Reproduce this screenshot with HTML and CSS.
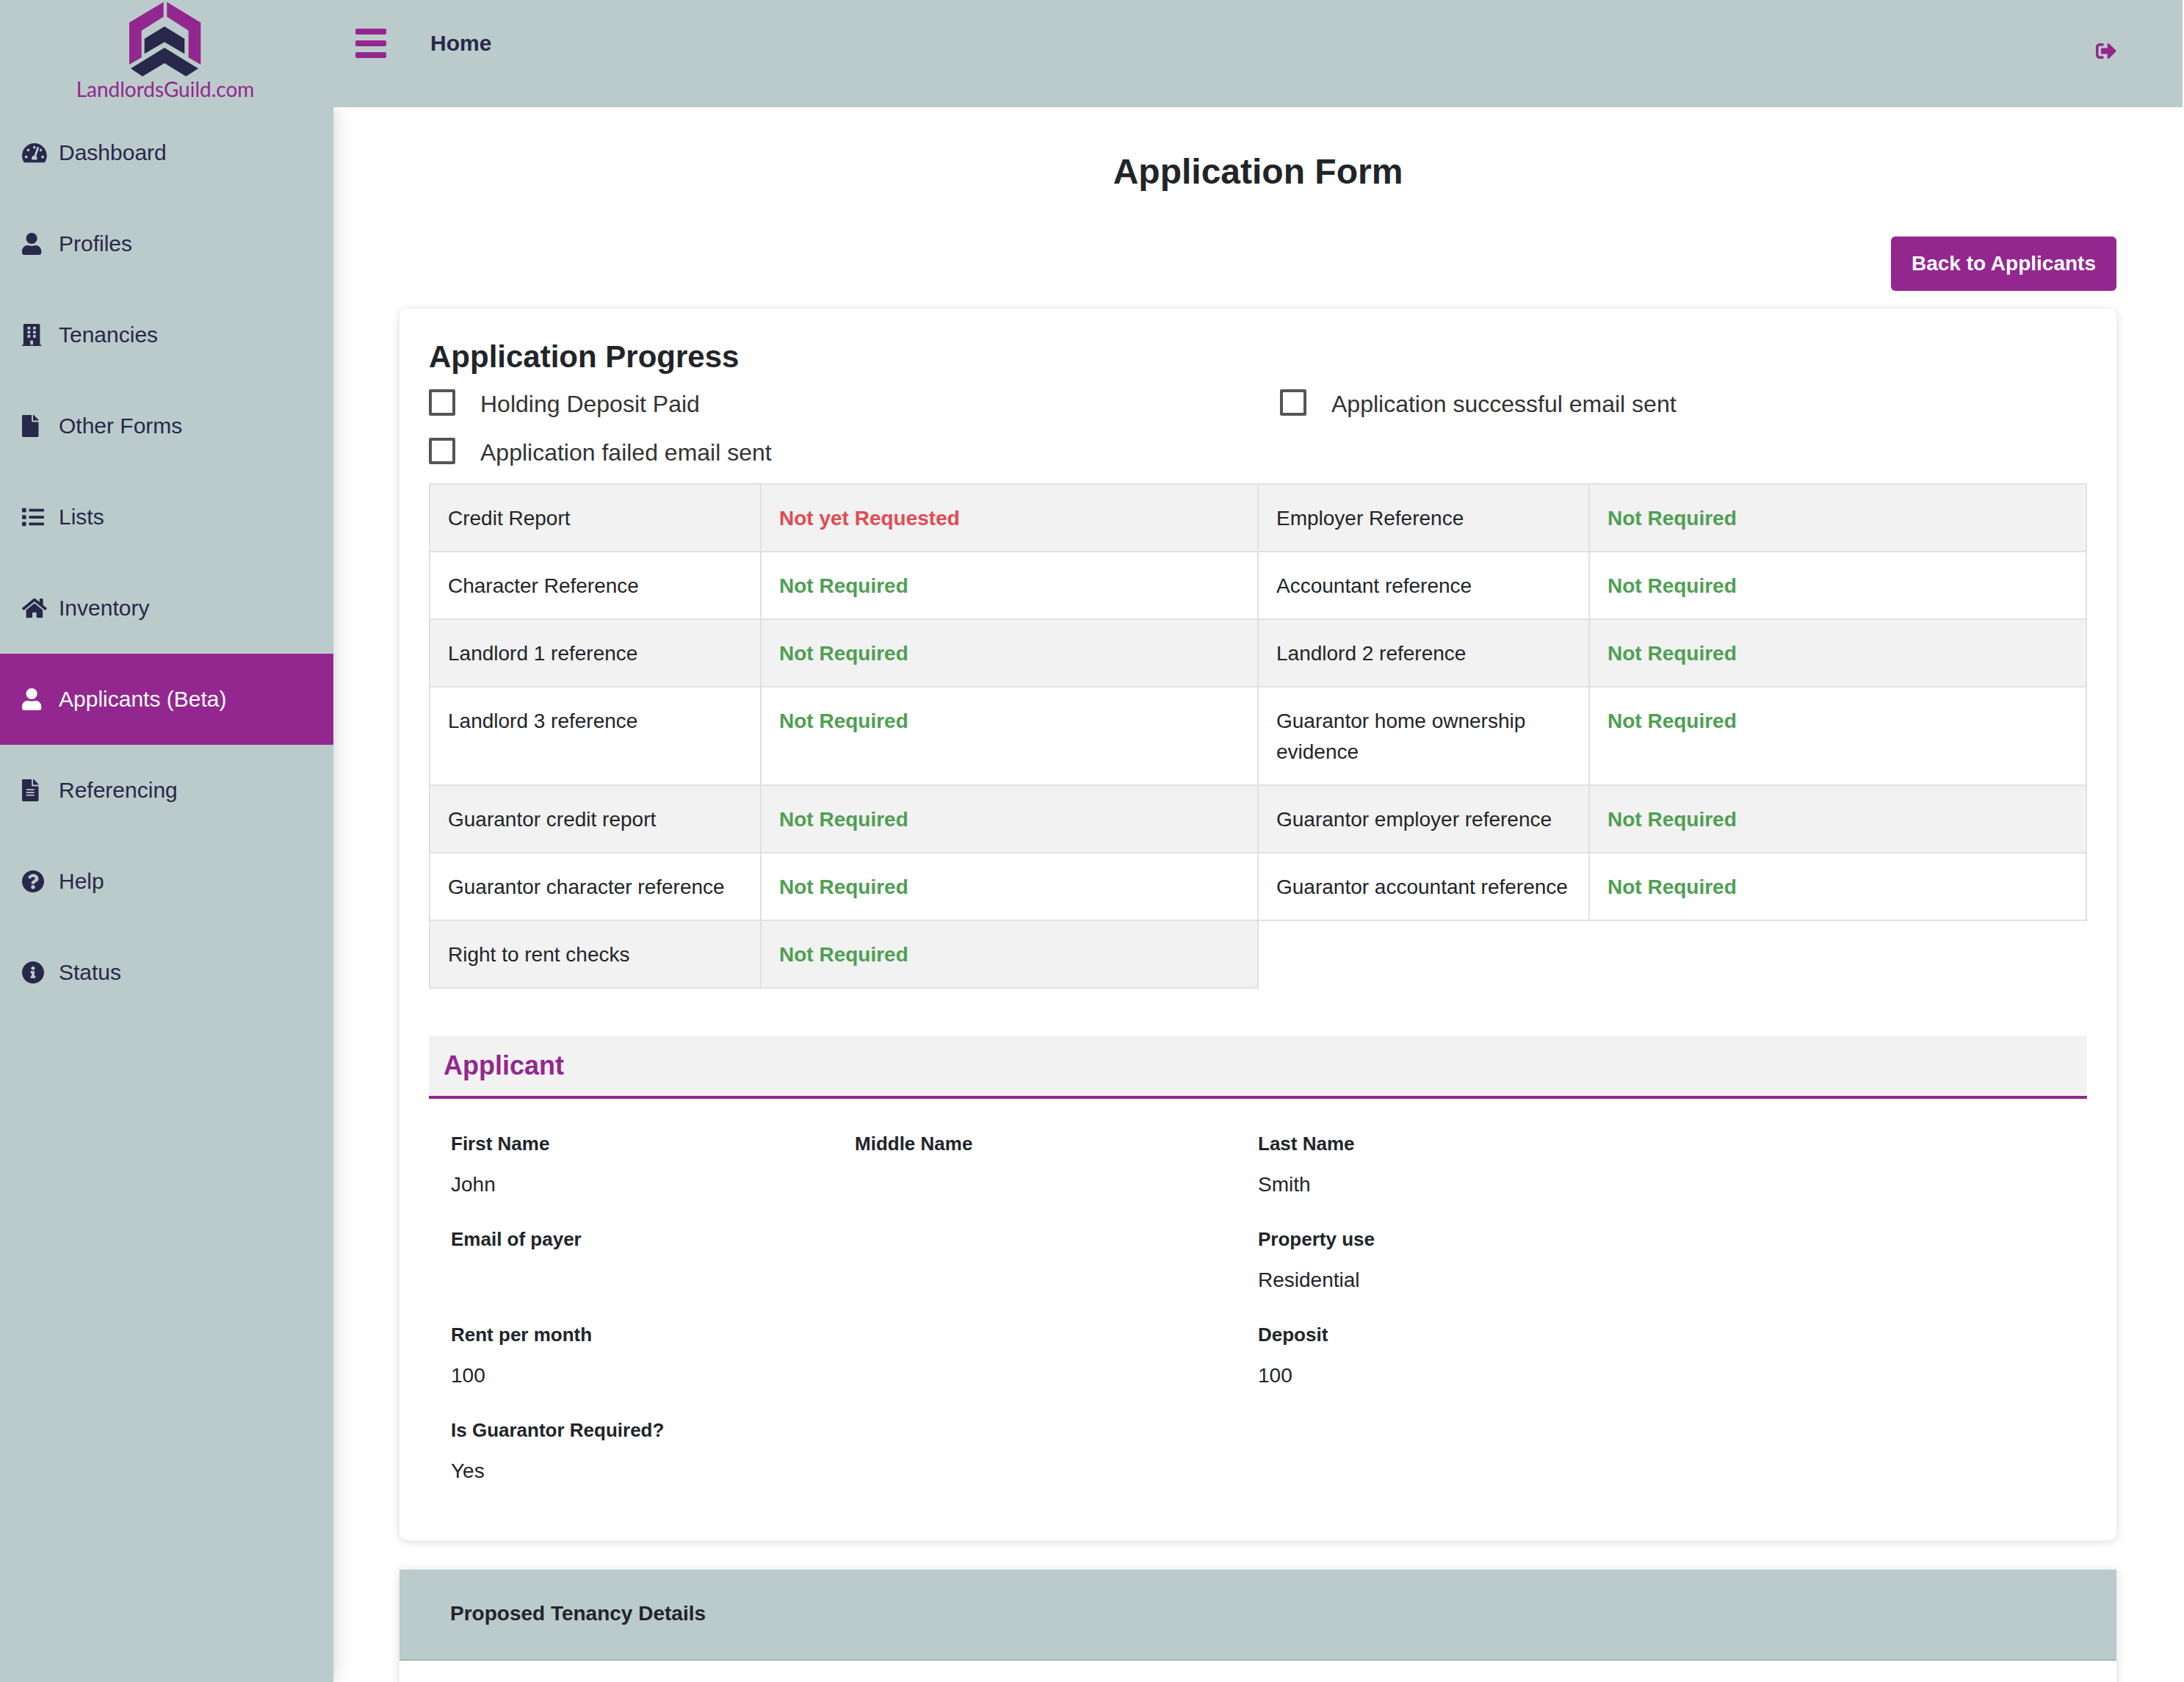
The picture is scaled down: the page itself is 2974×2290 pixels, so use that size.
FILE: index.html
```html
<!DOCTYPE html>
<html>
<head>
    <title>Application Form</title>
    <link rel="stylesheet" href="styles.css">
</head>
<body>
    <div class="page">
        <header class="topbar">
            <div class="brand">
                <svg class="brand-mark" viewBox="176 2 98 102">
                    <path fill="#93278f" d="M222.700 2.700L176 30.700V88L192.700 78.300V41.700L222.700 22.700zM227.300 2.700L273.300 30.700V88L256.700 78.300V41.700L227.300 22.700z"/>
                    <path fill="#28284a" d="M224 36L251.300 52.700V73.300L224 57.300L196.700 73.300V52.700z"/>
                    <path fill="#28284a" d="M224 65L270 93.300L253.300 104L224 86L194 104L178 93.300z"/>
                </svg>
                <span class="brand-name">LandlordsGuild.com</span>
            </div>
            <div class="menu-toggle"><span></span><span></span><span></span></div>
            <span class="crumb">Home</span>
            <svg class="logout" viewBox="0 0 512 384"><path d="M497 209L329 377c-15 15-41 4.500-41-17v-96H152c-13.300 0-24-10.700-24-24v-96c0-13.300 10.700-24 24-24h136V24c0-21.400 25.900-32 41-17l168 168c9.300 9.400 9.300 24.600 0 34zM192 372v-40c0-6.600-5.400-12-12-12H96c-17.700 0-32-14.300-32-32V96c0-17.700 14.300-32 32-32h84c6.600 0 12-5.400 12-12V12c0-6.600-5.400-12-12-12H96C43 0 0 43 0 96v192c0 53 43 96 96 96h84c6.600 0 12-5.400 12-12z"/></svg>
        </header>

        <div class="layout">
            <nav class="sidebar">
                <a class="nav-item">
                    <svg class="nav-icon" viewBox="0 0 576 512" preserveAspectRatio="xMinYMid"><path d="M288 32C128.940 32 0 160.940 0 320c0 52.800 14.250 102.260 39.060 144.800 5.610 9.620 16.300 15.200 27.440 15.200h443c11.140 0 21.830-5.580 27.440-15.200C561.750 422.260 576 372.800 576 320c0-159.060-128.940-288-288-288zm0 64c14.710 0 26.580 10.130 30.320 23.650-1.110 2.260-2.640 4.230-3.450 6.670l-9.220 27.670c-5.130 3.490-10.970 6.010-17.640 6.010-17.670 0-32-14.330-32-32S270.330 96 288 96zM96 384c-17.670 0-32-14.330-32-32s14.330-32 32-32 32 14.330 32 32-14.330 32-32 32zm48-160c-17.670 0-32-14.330-32-32s14.330-32 32-32 32 14.330 32 32-14.330 32-32 32zm246.770-72.410l-61.330 184C343.130 347.330 352 364.540 352 384c0 11.720-3.380 22.550-8.880 32H232.880c-5.500-9.450-8.880-20.280-8.880-32 0-33.940 26.500-61.430 59.900-63.590l61.340-184.010c4.170-12.560 17.730-19.450 30.360-15.170 12.570 4.190 19.350 17.790 15.170 30.360zm14.660 57.200l15.520-46.550c3.470-1.290 7.130-2.230 11.050-2.230 17.670 0 32 14.330 32 32s-14.330 32-32 32c-11.380-.010-20.890-6.280-26.570-15.220zM480 384c-17.670 0-32-14.330-32-32s14.330-32 32-32 32 14.330 32 32-14.330 32-32 32z"/></svg>
                    Dashboard
                </a>
                <a class="nav-item">
                    <svg class="nav-icon" viewBox="0 0 448 512" preserveAspectRatio="xMinYMid"><path d="M224 256c70.700 0 128-57.300 128-128S294.700 0 224 0 96 57.300 96 128s57.300 128 128 128zm89.600 32h-16.700c-22.200 10.200-46.900 16-72.900 16s-50.600-5.800-72.900-16h-16.700C60.200 288 0 348.200 0 422.400V464c0 26.500 21.500 48 48 48h352c26.500 0 48-21.500 48-48v-41.600c0-74.200-60.200-134.400-134.400-134.400z"/></svg>
                    Profiles
                </a>
                <a class="nav-item">
                    <svg class="nav-icon" viewBox="0 0 448 512" preserveAspectRatio="xMinYMid"><path d="M436 480h-20V24c0-13.255-10.745-24-24-24H56C42.745 0 32 10.745 32 24v456H12c-6.627 0-12 5.373-12 12v20h448v-20c0-6.627-5.373-12-12-12zM128 76c0-6.627 5.373-12 12-12h40c6.627 0 12 5.373 12 12v40c0 6.627-5.373 12-12 12h-40c-6.627 0-12-5.373-12-12V76zm0 96c0-6.627 5.373-12 12-12h40c6.627 0 12 5.373 12 12v40c0 6.627-5.373 12-12 12h-40c-6.627 0-12-5.373-12-12v-40zm52 148h-40c-6.627 0-12-5.373-12-12v-40c0-6.627 5.373-12 12-12h40c6.627 0 12 5.373 12 12v40c0 6.627-5.373 12-12 12zm76 160h-64v-84c0-6.627 5.373-12 12-12h40c6.627 0 12 5.373 12 12v84zm64-172c0 6.627-5.373 12-12 12h-40c-6.627 0-12-5.373-12-12v-40c0-6.627 5.373-12 12-12h40c6.627 0 12 5.373 12 12v40zm0-96c0 6.627-5.373 12-12 12h-40c-6.627 0-12-5.373-12-12v-40c0-6.627 5.373-12 12-12h40c6.627 0 12 5.373 12 12v40zm0-96c0 6.627-5.373 12-12 12h-40c-6.627 0-12-5.373-12-12V76c0-6.627 5.373-12 12-12h40c6.627 0 12 5.373 12 12v40z"/></svg>
                    Tenancies
                </a>
                <a class="nav-item">
                    <svg class="nav-icon" viewBox="0 0 384 512" preserveAspectRatio="xMinYMid"><path d="M224 136V0H24C10.700 0 0 10.700 0 24v464c0 13.300 10.700 24 24 24h336c13.300 0 24-10.700 24-24V160H248c-13.200 0-24-10.800-24-24zm160-14.100v6.100H256V0h6.100c6.400 0 12.500 2.500 17 7l97.900 98c4.500 4.500 7 10.600 7 16.900z"/></svg>
                    Other Forms
                </a>
                <a class="nav-item">
                    <svg class="nav-icon" viewBox="0 0 512 512" preserveAspectRatio="xMinYMid"><path d="M80 368H16a16 16 0 0 0-16 16v64a16 16 0 0 0 16 16h64a16 16 0 0 0 16-16v-64a16 16 0 0 0-16-16zm0-320H16A16 16 0 0 0 0 64v64a16 16 0 0 0 16 16h64a16 16 0 0 0 16-16V64a16 16 0 0 0-16-16zm0 160H16a16 16 0 0 0-16 16v64a16 16 0 0 0 16 16h64a16 16 0 0 0 16-16v-64a16 16 0 0 0-16-16zm416 176H176a16 16 0 0 0-16 16v32a16 16 0 0 0 16 16h320a16 16 0 0 0 16-16v-32a16 16 0 0 0-16-16zm0-320H176a16 16 0 0 0-16 16v32a16 16 0 0 0 16 16h320a16 16 0 0 0 16-16V80a16 16 0 0 0-16-16zm0 160H176a16 16 0 0 0-16 16v32a16 16 0 0 0 16 16h320a16 16 0 0 0 16-16v-32a16 16 0 0 0-16-16z"/></svg>
                    Lists
                </a>
                <a class="nav-item">
                    <svg class="nav-icon" viewBox="0 0 576 512" preserveAspectRatio="xMinYMid"><path d="M280.370 148.260L96 300.110V464a16 16 0 0 0 16 16l112.060-.29a16 16 0 0 0 15.920-16V368a16 16 0 0 1 16-16h64a16 16 0 0 1 16 16v95.640a16 16 0 0 0 16 16.050L464 480a16 16 0 0 0 16-16V300L295.670 148.260a12.190 12.190 0 0 0-15.300 0zM571.600 251.470L488 182.560V44.050a12 12 0 0 0-12-12h-56a12 12 0 0 0-12 12v72.610L318.470 43a48 48 0 0 0-61 0L4.340 251.470a12 12 0 0 0-1.600 16.900l25.500 31A12 12 0 0 0 45.150 301l235.220-193.740a12.190 12.190 0 0 1 15.300 0L530.900 301a12 12 0 0 0 16.900-1.600l25.500-31a12 12 0 0 0-1.700-16.930z"/></svg>
                    Inventory
                </a>
                <a class="nav-item active">
                    <svg class="nav-icon" viewBox="0 0 448 512" preserveAspectRatio="xMinYMid"><path d="M224 256c70.700 0 128-57.300 128-128S294.700 0 224 0 96 57.300 96 128s57.300 128 128 128zm89.600 32h-16.700c-22.200 10.200-46.900 16-72.900 16s-50.600-5.800-72.900-16h-16.700C60.200 288 0 348.200 0 422.400V464c0 26.500 21.500 48 48 48h352c26.500 0 48-21.500 48-48v-41.600c0-74.200-60.200-134.400-134.400-134.400z"/></svg>
                    Applicants (Beta)
                </a>
                <a class="nav-item">
                    <svg class="nav-icon" viewBox="0 0 384 512" preserveAspectRatio="xMinYMid"><path d="M224 136V0H24C10.700 0 0 10.700 0 24v464c0 13.300 10.700 24 24 24h336c13.300 0 24-10.700 24-24V160H248c-13.200 0-24-10.800-24-24zm64 236c0 6.600-5.400 12-12 12H108c-6.600 0-12-5.400-12-12v-8c0-6.600 5.400-12 12-12h168c6.600 0 12 5.400 12 12v8zm0-64c0 6.600-5.400 12-12 12H108c-6.600 0-12-5.400-12-12v-8c0-6.600 5.400-12 12-12h168c6.600 0 12 5.400 12 12v8zm0-72v8c0 6.600-5.400 12-12 12H108c-6.600 0-12-5.400-12-12v-8c0-6.600 5.400-12 12-12h168c6.600 0 12 5.400 12 12zm96-114.100v6.100H256V0h6.100c6.400 0 12.500 2.500 17 7l97.900 98c4.500 4.500 7 10.600 7 16.900z"/></svg>
                    Referencing
                </a>
                <a class="nav-item">
                    <svg class="nav-icon" viewBox="8 8 496 496" preserveAspectRatio="xMinYMid"><path d="M504 256c0 136.997-111.043 248-248 248S8 392.997 8 256C8 119.083 119.043 8 256 8s248 111.083 248 248zM262.655 90c-54.497 0-89.255 22.957-116.549 63.758-3.536 5.286-2.353 12.415 2.715 16.258l34.699 26.310c5.205 3.947 12.621 3.008 16.665-2.122 17.864-22.658 30.113-35.797 57.303-35.797 20.429 0 45.698 13.148 45.698 32.958 0 14.976-12.363 22.667-32.534 33.976C247.128 238.528 216 254.941 216 296v4c0 6.627 5.373 12 12 12h56c6.627 0 12-5.373 12-12v-1.333c0-28.462 83.186-29.647 83.186-106.667 0-58.002-60.165-102-116.531-102zM256 338c-25.365 0-46 20.635-46 46 0 25.364 20.635 46 46 46s46-20.636 46-46c0-25.365-20.635-46-46-46z"/></svg>
                    Help
                </a>
                <a class="nav-item">
                    <svg class="nav-icon" viewBox="8 8 496 496" preserveAspectRatio="xMinYMid"><path d="M256 8C119.043 8 8 119.083 8 256c0 136.997 111.043 248 248 248s248-111.003 248-248C504 119.083 392.957 8 256 8zm0 110c23.196 0 42 18.804 42 42s-18.804 42-42 42-42-18.804-42-42 18.804-42 42-42zm56 254c0 6.627-5.373 12-12 12h-88c-6.627 0-12-5.373-12-12v-24c0-6.627 5.373-12 12-12h12v-64h-12c-6.627 0-12-5.373-12-12v-24c0-6.627 5.373-12 12-12h64c6.627 0 12 5.373 12 12v100h12c6.627 0 12 5.373 12 12v24z"/></svg>
                    Status
                </a>
            </nav>

            <main class="content">
                <h1 class="page-title">Application Form</h1>
                <div class="page-actions"><a class="btn">Back to Applicants</a></div>

                <section class="card">
                    <h2 class="card-title">Application Progress</h2>
                    <div class="checks">
                        <label class="check"><span class="box"></span>Holding Deposit Paid</label>
                        <label class="check"><span class="box"></span>Application successful email sent</label>
                        <label class="check"><span class="box"></span>Application failed email sent</label>
                    </div>

                    <table class="progress">
                        <colgroup>
                            <col class="col-name"><col class="col-state"><col class="col-name"><col class="col-state">
                        </colgroup>
                        <tr>
                            <td>Credit Report</td><td class="bad">Not yet Requested</td>
                            <td>Employer Reference</td><td class="ok">Not Required</td>
                        </tr>
                        <tr>
                            <td>Character Reference</td><td class="ok">Not Required</td>
                            <td>Accountant reference</td><td class="ok">Not Required</td>
                        </tr>
                        <tr>
                            <td>Landlord 1 reference</td><td class="ok">Not Required</td>
                            <td>Landlord 2 reference</td><td class="ok">Not Required</td>
                        </tr>
                        <tr>
                            <td>Landlord 3 reference</td><td class="ok">Not Required</td>
                            <td>Guarantor home ownership evidence</td><td class="ok">Not Required</td>
                        </tr>
                        <tr>
                            <td>Guarantor credit report</td><td class="ok">Not Required</td>
                            <td>Guarantor employer reference</td><td class="ok">Not Required</td>
                        </tr>
                        <tr>
                            <td>Guarantor character reference</td><td class="ok">Not Required</td>
                            <td>Guarantor accountant reference</td><td class="ok">Not Required</td>
                        </tr>
                        <tr>
                            <td>Right to rent checks</td><td class="ok">Not Required</td>
                        </tr>
                    </table>

                    <h3 class="section-head">Applicant</h3>
                    <div class="fields">
                        <div class="field"><div class="field-label">First Name</div><div class="field-value">John</div></div>
                        <div class="field"><div class="field-label">Middle Name</div></div>
                        <div class="field"><div class="field-label">Last Name</div><div class="field-value">Smith</div></div>
                        <div class="field"><div class="field-label">Email of payer</div></div>
                        <div class="field third"><div class="field-label">Property use</div><div class="field-value">Residential</div></div>
                        <div class="field"><div class="field-label">Rent per month</div><div class="field-value">100</div></div>
                        <div class="field third"><div class="field-label">Deposit</div><div class="field-value">100</div></div>
                        <div class="field"><div class="field-label">Is Guarantor Required?</div><div class="field-value">Yes</div></div>
                    </div>
                </section>

                <section class="card panel">
                    <div class="panel-head">Proposed Tenancy Details</div>
                </section>
            </main>
        </div>
    </div>
</body>
</html>
```
FILE: styles.css
```css
* {
    box-sizing: border-box;
}

html, body {
    margin: 0;
    padding: 0;
    height: 2290px;
    overflow: hidden;
    background-color: #fff;
}

body {
    font-family: "Liberation Sans", Arial, sans-serif;
    font-size: 28px;
    line-height: 42px;
    color: #212529;
}

.page {
    width: 2972px;
}

/* top bar */
.topbar {
    position: relative;
    z-index: 2;
    display: flex;
    align-items: flex-start;
    height: 146px;
    background-color: #bbcbcb;
}

.brand {
    width: 454px;
    flex-shrink: 0;
    display: flex;
    flex-direction: column;
    align-items: center;
    padding-top: 2px;
    padding-right: 4px;
}

.brand-mark {
    width: 98px;
    height: 102px;
    display: block;
}

.brand-name {
    font-family: Lato, sans-serif;
    font-size: 28px;
    line-height: 30px;
    color: #93278f;
    margin-top: 2px;
}

.menu-toggle {
    width: 42px;
    margin: 39px 0 0 30px;
    display: flex;
    flex-direction: column;
    gap: 8px;
}

.menu-toggle span {
    height: 8px;
    border-radius: 2px;
    background-color: #93278f;
}

.crumb {
    margin: 38px 0 0 60px;
    font-size: 30px;
    font-weight: bold;
    color: #28284a;
}

.logout {
    width: 28px;
    height: 21px;
    margin: 59px 90px 0 auto;
    fill: #93278f;
}

/* sidebar */
.layout {
    display: flex;
    height: 2144px;
}

.sidebar {
    width: 454px;
    flex-shrink: 0;
    background-color: #bbcbcb;
    box-shadow: 0 0 24px rgba(0, 0, 0, 0.2);
}

.nav-item {
    display: flex;
    align-items: center;
    height: 124px;
    padding-left: 30px;
    font-size: 30px;
    color: #28284a;
}

.nav-item.active {
    background-color: #93278f;
    color: #fff;
}

.nav-icon {
    width: 50px;
    height: 30px;
    flex-shrink: 0;
    fill: currentColor;
}

/* main column */
.content {
    flex: 1;
    padding: 0 90px;
    overflow: hidden;
}

.page-title {
    margin: 59px 0 0;
    text-align: center;
    font-size: 48px;
    line-height: 58px;
    font-weight: bold;
}

.page-actions {
    display: flex;
    justify-content: flex-end;
    margin-top: 59px;
}

.btn {
    display: block;
    height: 74px;
    padding: 0 28px;
    border-radius: 6px;
    background-color: #93278f;
    color: #fff;
    font-weight: bold;
    line-height: 74px;
}

.card {
    margin-top: 24px;
    padding: 41px 40px 40px;
    background-color: #fff;
    border-radius: 10px;
    box-shadow: 0 2px 14px rgba(0, 0, 0, 0.14);
}

.card-title {
    margin: 0;
    font-size: 42px;
    line-height: 50px;
    font-weight: bold;
}

.checks {
    display: grid;
    grid-template-columns: 1159px 1fr;
    margin-top: 6px;
}

.check {
    display: flex;
    align-items: center;
    height: 66px;
    font-size: 32px;
    color: #333;
}

.box {
    width: 36px;
    height: 36px;
    margin-right: 34px;
    margin-bottom: 4px;
    border: 4px solid #555;
    border-radius: 2px;
}

/* progress table */
.progress {
    width: 2256px;
    margin-top: 9px;
    table-layout: fixed;
    border-collapse: collapse;
}

.col-name {
    width: 451px;
}

.col-state {
    width: 677px;
}

.progress td {
    padding: 25px 24px 23px;
    vertical-align: top;
    border: 2px solid #dee2e6;
}

.progress tr:nth-child(odd) td {
    background-color: #f2f2f2;
}

.ok {
    font-weight: bold;
    color: #4f9f53;
}

.bad {
    font-weight: bold;
    color: #e24b52;
}

/* applicant fields */
.section-head {
    margin: 64px 0 0;
    height: 86px;
    padding-left: 20px;
    background-color: #f2f2f2;
    border-bottom: 4px solid #93278f;
    font-size: 36px;
    line-height: 82px;
    font-weight: bold;
    color: #93278f;
}

.fields {
    display: grid;
    grid-template-columns: 550px 549px 1fr;
    margin-top: 41px;
    padding-left: 30px;
}

.third {
    grid-column-start: 3;
}

.field {
    padding-bottom: 33px;
}

.field-label {
    font-size: 26px;
    line-height: 40px;
    font-weight: bold;
    margin-bottom: 15px;
}

.panel {
    margin-top: 40px;
    padding: 0;
    height: 400px;
    border-radius: 0;
}

.panel-head {
    height: 124px;
    padding-left: 69px;
    background-color: #bbcbcb;
    border-bottom: 2px solid #a3b1b1;
    font-weight: bold;
    line-height: 120px;
}
```
